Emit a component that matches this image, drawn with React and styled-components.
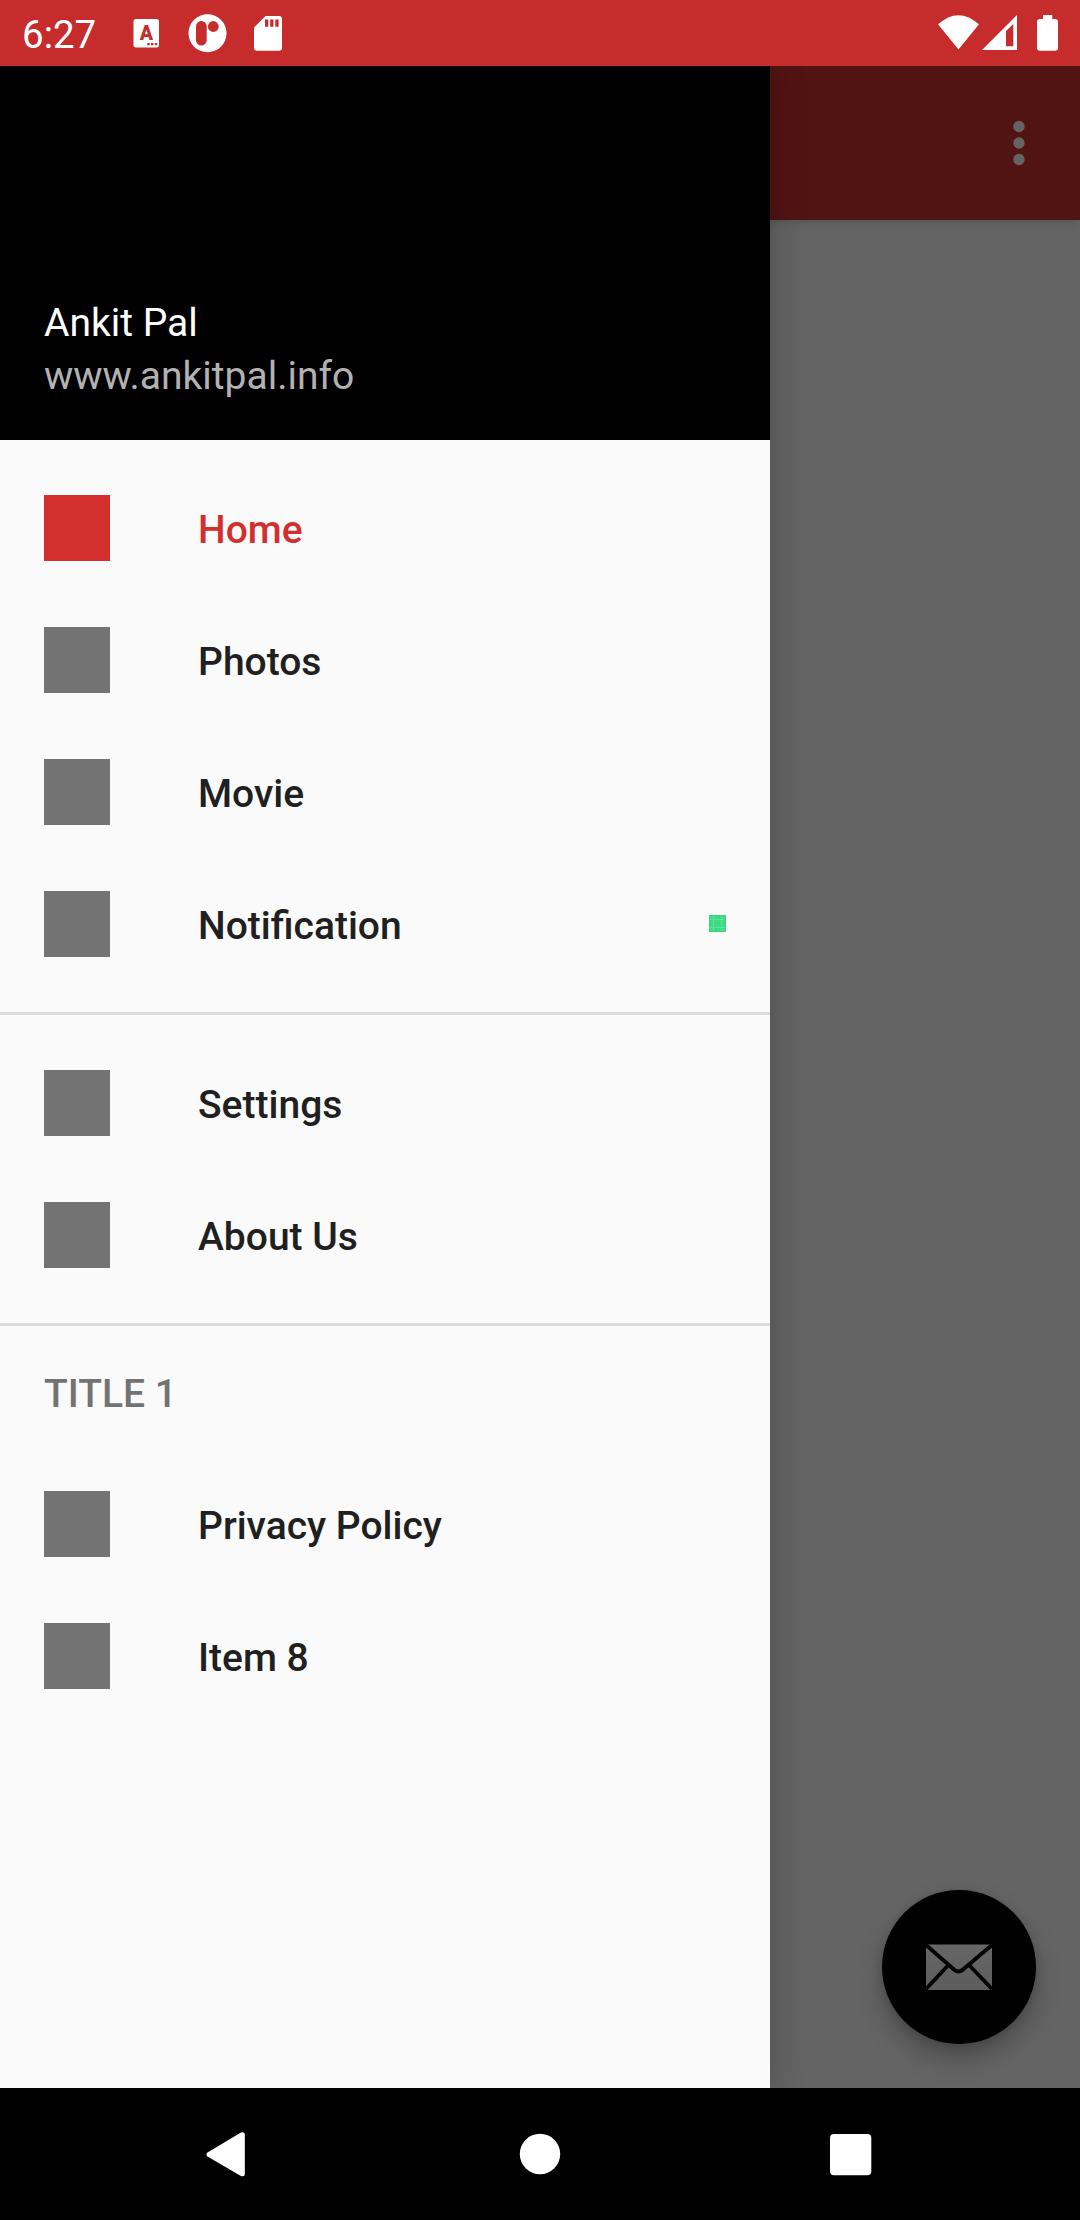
import React from 'react';
import styled, { createGlobalStyle } from 'styled-components';

const GlobalStyle = createGlobalStyle`
  * { box-sizing: border-box; }
  body { margin: 0; background: #000; }
`;

const Screen = styled.div`
  width: 1080px;
  height: 2220px;
  display: flex;
  flex-direction: column;
  overflow: hidden;
  font-family: Roboto, "Liberation Sans", sans-serif;
  font-size: 39px;
  line-height: 45px;
`;

const StatusBar = styled.header`
  height: 66px;
  flex: none;
  display: flex;
  align-items: center;
  justify-content: space-between;
  padding: 0 22px 0 22px;
  background: #c62c2c;
  color: #fff;
`;

const StatusGroup = styled.div`
  display: flex;
  align-items: center;
`;

const Clock = styled.span`
  width: 86px;
  padding-top: 2px;
  font-size: 38.5px;
`;

const Icon = styled.svg`
  display: block;
  flex: none;
`;

const Badge = styled(Icon)`
  margin-bottom: 2px;
`;

const Body = styled.div`
  flex: 1;
  position: relative;
  display: flex;
  flex-direction: column;
  overflow: hidden;
  background: #646464;
`;

const AppBar = styled.div`
  height: 154px;
  flex: none;
  display: flex;
  align-items: center;
  justify-content: flex-end;
  padding-right: 55px;
  background: #521313;
  box-shadow: 0 2px 9px rgba(0, 0, 0, 0.16);
`;

const Content = styled.main`
  flex: 1;
  display: flex;
  align-items: flex-end;
  justify-content: flex-end;
  padding: 44px;
`;

const Fab = styled.button`
  width: 154px;
  height: 154px;
  padding: 0;
  border: 0;
  border-radius: 50%;
  display: flex;
  align-items: center;
  justify-content: center;
  background: #000;
  box-shadow: 0 14px 26px rgba(0, 0, 0, 0.26), 0 2px 8px rgba(0, 0, 0, 0.12);
`;

const Drawer = styled.nav`
  position: absolute;
  inset: 0 auto 0 0;
  width: 770px;
  background: #fafafa;
  box-shadow: 0 0 34px rgba(0, 0, 0, 0.24);
`;

const DrawerHeader = styled.div`
  height: 374px;
  display: flex;
  flex-direction: column;
  justify-content: flex-end;
  gap: 8px;
  padding: 0 44px 41px;
  background: #000;
`;

const Name = styled.div`
  color: #fff;
`;

const Website = styled.div`
  color: #b2b2b2;
`;

const Group = styled.section`
  padding: ${(p) => (p.$flush ? '0' : '22px 0')};
  & + & {
    border-top: 3px solid #dcdcdc;
  }
`;

const GroupTitle = styled.div`
  height: 132px;
  display: flex;
  align-items: center;
  padding: 4px 44px 0;
  font-weight: 500;
  color: #737373;
`;

const Item = styled.a`
  height: 132px;
  display: flex;
  align-items: center;
  padding: 0 44px;
  font-weight: 500;
  color: ${(p) => (p.$active ? '#d32f2f' : '#202020')};
`;

const ItemIcon = styled.span`
  width: 66px;
  height: 66px;
  margin-right: 88px;
  background: ${(p) => (p.$active ? '#d32f2f' : '#737373')};
`;

const ItemLabel = styled.span`
  flex: 1;
  padding-top: 4px;
`;

const NavBar = styled.footer`
  height: 132px;
  flex: none;
  display: flex;
  align-items: center;
  justify-content: space-between;
  padding: 0 207px 0 204px;
  background: #000;
`;

const groups = [
  { items: ['Home', 'Photos', 'Movie', 'Notification'] },
  { items: ['Settings', 'About Us'] },
  { title: 'TITLE 1', items: ['Privacy Policy', 'Item 8'] },
];

function BadgeIcon() {
  return (
    <Badge width="17" height="17" viewBox="0 0 17 17">
      <rect width="17" height="17" fill="#3ddc84" />
      <path d="M4.5 0v17M12.5 0v17M0 4.5h17M0 12.5h17" stroke="#5be397" strokeWidth="1" />
      <path d="M.5 .5h16v16H.5z" fill="none" stroke="#3fd382" />
    </Badge>
  );
}

function StatusIcons() {
  return (
    <StatusGroup>
      <Clock>6:27</Clock>
      <Icon width="174" height="44" viewBox="108 11 174 44" fill="#fff">
        <rect x="133.500" y="19" width="25.500" height="28.500" rx="2.500" />
        <text x="146.300" y="39.900" textAnchor="middle" fontFamily="Roboto, sans-serif" fontWeight="900" fontSize="19.500" fill="#c62c2c">A</text>
        <path d="M147.300 43h2.400v2.300h-2.400zM151 43h2.400v2.300H151zM154.800 43h2.400v2.300h-2.400z" fill="#c62c2c" />
        <circle cx="207.500" cy="33.300" r="19" />
        <rect x="196" y="21" width="10.700" height="24.500" rx="5.300" fill="#c62c2c" />
        <circle cx="213.300" cy="26.500" r="5.400" fill="#c62c2c" />
        <path d="M265.500 16H279q3 0 3 3V47.800q0 3-3 3H257q-3 0-3-3V27.500z" />
        <path d="M265 19.500h3.300v7.200H265zM270.200 19.500h3.300v7.200h-3.300zM275.300 19.500h3.300v7.200h-3.300z" fill="#c62c2c" />
      </Icon>
    </StatusGroup>
  );
}

export default function App() {
  return (
    <Screen>
      <GlobalStyle />
      <StatusBar>
        <StatusIcons />
        <Icon width="120" height="44" viewBox="938 11 120 44" fill="#fff">
          <path d="M938 24.300Q958.500 6 979 24.300L958.500 49.500z" />
          <path fillRule="evenodd" d="M1017 15V50H982zM1013.300 24L1006 31V46.300H1013.300z" />
          <path d="M1043 15h9.300v4H1055q3 0 3 2.500V48q0 2.800-3 2.800h-15q-3 0-3-2.800V21.500q0-2.500 3-2.500h3z" />
        </Icon>
      </StatusBar>
      <Body>
        <AppBar>
          <Icon width="12" height="46" viewBox="0 0 12 46" fill="#646464">
            <circle cx="6" cy="6.500" r="5.700" />
            <circle cx="6" cy="23" r="5.700" />
            <circle cx="6" cy="39.500" r="5.700" />
          </Icon>
        </AppBar>
        <Content>
          <Fab aria-label="Mail">
            <Icon width="66" height="46" viewBox="0 0 66 46">
              <defs>
                <linearGradient id="mail" x1="0" y1="0" x2="0" y2="1">
                  <stop offset="0" stopColor="#666" />
                  <stop offset="1" stopColor="#5c5c5c" />
                </linearGradient>
              </defs>
              <rect y="0.500" width="66" height="45.500" fill="url(#mail)" />
              <path d="M0 1L28 25.500Q32.500 29.500 37 25.500L66 1M22 21.500L0 45M43.500 21.500L66 45" fill="none" stroke="#000" strokeWidth="3.800" />
            </Icon>
          </Fab>
        </Content>
        <Drawer>
          <DrawerHeader>
            <Name>Ankit Pal</Name>
            <Website>www.ankitpal.info</Website>
          </DrawerHeader>
          {groups.map((group, i) => (
            <Group key={i} $flush={Boolean(group.title)}>
              {group.title && <GroupTitle>{group.title}</GroupTitle>}
              {group.items.map((label) => (
                <Item key={label} $active={label === 'Home'}>
                  <ItemIcon $active={label === 'Home'} />
                  <ItemLabel>{label}</ItemLabel>
                  {label === 'Notification' && <BadgeIcon />}
                </Item>
              ))}
            </Group>
          ))}
        </Drawer>
      </Body>
      <NavBar>
        <Icon width="44" height="48" viewBox="204 2130 44 48" fill="#fff">
          <path d="M207.500 2152.500L240.500 2132.800Q244.800 2131 244.800 2135V2174Q244.800 2177.500 240.500 2175.800L207.500 2156.500Q205.300 2154.500 207.500 2152.500z" />
        </Icon>
        <Icon width="44" height="42" viewBox="0 0 44 42" fill="#fff">
          <circle cx="23" cy="21" r="20.200" />
        </Icon>
        <Icon width="43" height="44" viewBox="0 0 43 44" fill="#fff">
          <rect x="0" y="2" width="41.300" height="41.300" rx="4" />
        </Icon>
      </NavBar>
    </Screen>
  );
}
